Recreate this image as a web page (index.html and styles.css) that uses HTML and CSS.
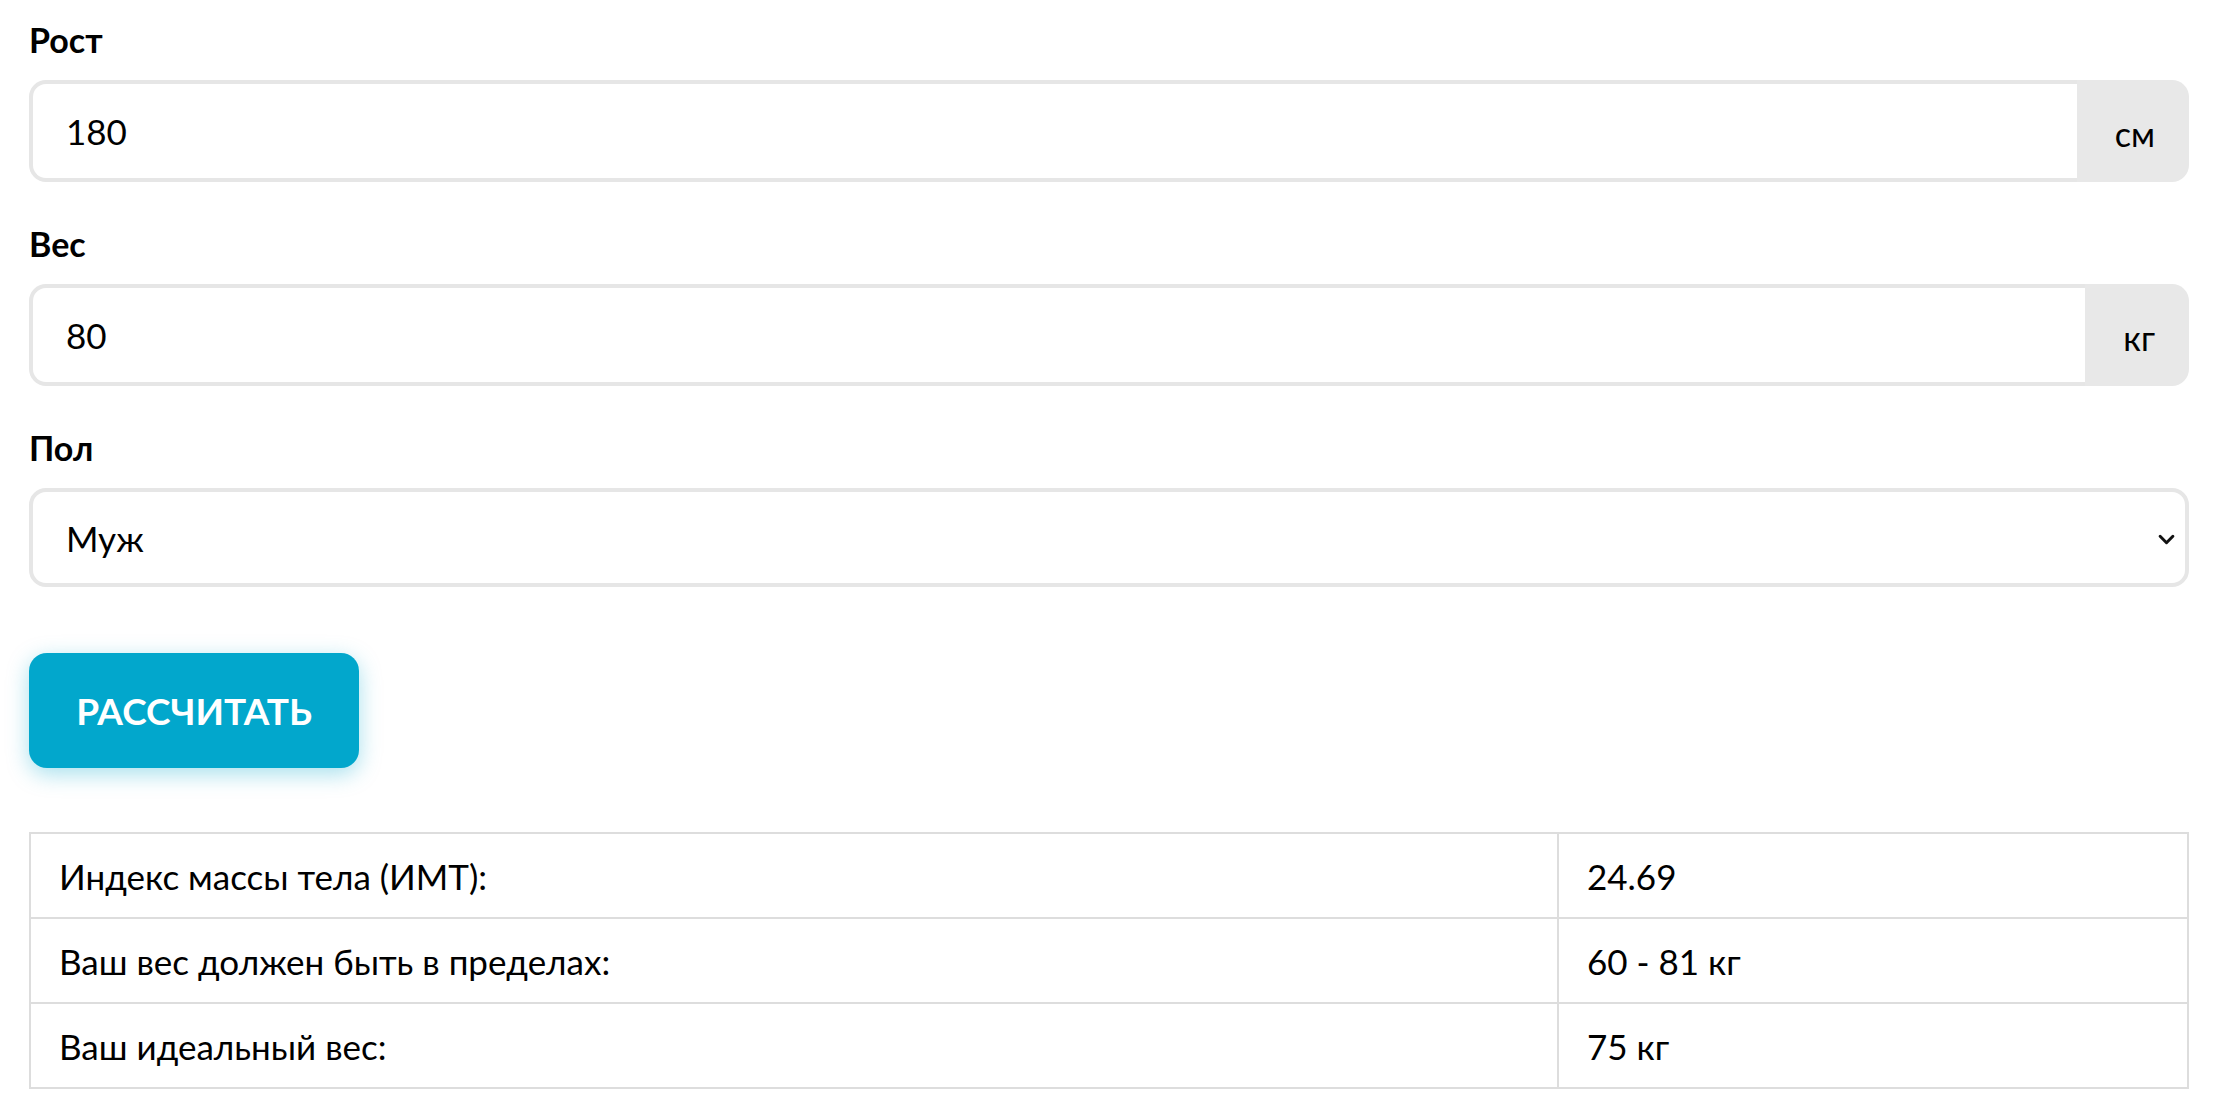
FILE: index.html
```html
<!DOCTYPE html>
<html lang="ru">
<head>
<meta charset="utf-8">
<title>ИМТ</title>
<link rel="stylesheet" href="styles.css">
</head>
<body>
<div class="page">
  <div class="field">
    <label class="label" for="h">Рост</label>
    <div class="group">
      <input class="control" id="h" type="text" value="180">
      <span class="addon">см</span>
    </div>
  </div>
  <div class="field">
    <label class="label" for="w">Вес</label>
    <div class="group">
      <input class="control" id="w" type="text" value="80">
      <span class="addon">кг</span>
    </div>
  </div>
  <div class="field">
    <label class="label" for="s">Пол</label>
    <div class="select-wrap">
      <select class="control select" id="s">
        <option>Муж</option>
        <option>Жен</option>
      </select>
      <svg class="chevron" viewBox="0 0 16 10" width="17" height="11"><path d="M2 2 L8 8 L14 2" fill="none" stroke="#111" stroke-width="2.8" stroke-linecap="round" stroke-linejoin="round"/></svg>
    </div>
  </div>
  <button class="btn" type="button">РАССЧИТАТЬ</button>
  <table class="result">
    <tr><td class="k">Индекс массы тела (ИМТ):</td><td class="v">24.69</td></tr>
    <tr><td class="k">Ваш вес должен быть в пределах:</td><td class="v">60 - 81 кг</td></tr>
    <tr><td class="k">Ваш идеальный вес:</td><td class="v">75 кг</td></tr>
  </table>
</div>
</body>
</html>
```

FILE: styles.css
```css
html, body {
  margin: 0;
  padding: 0;
  background: #fff;
}
body {
  font-family: "Lato", "Open Sans", sans-serif;
  color: #000;
}
.page {
  padding: 0 42px 0 29px;
}
.label {
  display: block;
  font-weight: 700;
  font-size: 34px;
  line-height: 40px;
  padding-top: 20px;
  margin-bottom: 20px;
}
.group {
  display: flex;
  height: 102px;
  margin-bottom: 22px;
}
.control {
  box-sizing: border-box;
  font-family: "Lato", "Open Sans", sans-serif;
  font-size: 35px;
  color: #000;
  border: 4px solid #e6e6e6;
  background: #fff;
  outline: none;
  margin: 0;
}
.group .control {
  flex: 1;
  height: 102px;
  border-radius: 17px 0 0 17px;
  border-right: none;
  padding: 0 33px;
}
.addon {
  display: flex;
  align-items: center;
  padding: 4px 34px 0 38px;
  background: #e8e8e8;
  border-radius: 0 17px 17px 0;
  font-size: 34px;
}
.select-wrap {
  position: relative;
  height: 99px;
  margin-bottom: 66px;
}
.select {
  width: 100%;
  height: 99px;
  border-radius: 17px;
  padding: 0 33px;
  -webkit-appearance: none;
  appearance: none;
}
.chevron {
  position: absolute;
  right: 14px;
  top: 46px;
}
.btn {
  display: block;
  width: 330px;
  height: 115px;
  border: none;
  border-radius: 18px;
  background: #02a7cc;
  color: #fff;
  font-family: "Lato", "Open Sans", sans-serif;
  font-weight: 700;
  font-size: 37px;
  box-shadow: 0 6px 22px rgba(2, 167, 204, 0.35);
  margin-bottom: 64px;
}
.result {
  width: 100%;
  border-collapse: collapse;
  border: 2px solid #dddddd;
}
.result td {
  border: 2px solid #dddddd;
  height: 85px;
  padding: 0 28px;
  font-size: 35px;
  box-sizing: border-box;
}
.result .k {
  width: 1528px;
}
```
